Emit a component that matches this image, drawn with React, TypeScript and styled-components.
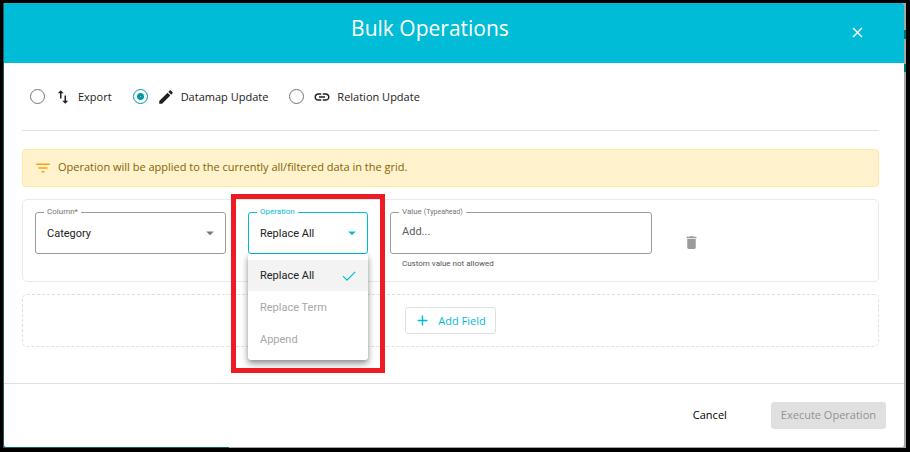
import React, { useState } from 'react';
import styled, { createGlobalStyle, css } from 'styled-components';
import {
  MdAdd,
  MdArrowDropDown,
  MdClose,
  MdDelete,
  MdEdit,
  MdFilterList,
  MdImportExport,
  MdLink,
} from 'react-icons/md';

const color = {
  primary: '#00bcd7',
  radio: '#0097a7',
  text: '#212121',
  outline: '#9b9b9b',
  line: '#e0e0e0',
};
const sans = "'Open Sans', sans-serif";
const roboto = "Roboto, sans-serif";

const GlobalStyle = createGlobalStyle`
  *, *::before, *::after { box-sizing: border-box; }
  body { margin: 0; background: #000; }
  button, input, select { margin: 0; font: inherit; color: inherit; }
  svg { display: block; flex: none; }
`;

const Backdrop = styled.div`
  margin: 3px 4px 4px 3px;
  padding: 0 2px 1px 1px;
  background:
    linear-gradient(#00707f, #00707f) right 27px / 2px 9px no-repeat,
    linear-gradient(#00707f, #00707f) right 61px / 2px 8px no-repeat,
    linear-gradient(to right, #175f67 25%, #a6a6a6 25%);
`;

const Dialog = styled.main`
  border-radius: 2px;
  overflow: hidden;
  background: #fff;
  color: ${color.text};
  font: 11px/16px ${sans};
`;

const Header = styled.header`
  display: grid;
  grid-template-columns: 1fr auto 1fr;
  align-items: center;
  height: 60px;
  padding: 0 38px 0 0;
  background: ${color.primary};
  color: #fff;
`;

const Title = styled.h1`
  grid-column: 2;
  margin: 0 10px 10px 0;
  font-size: 21px;
  line-height: 30px;
  font-weight: 400;
`;

const CloseButton = styled.button`
  justify-self: end;
  margin-bottom: 2px;
  padding: 0;
  border: 0;
  background: none;
  cursor: pointer;
`;

const Body = styled.div`
  display: flex;
  flex-direction: column;
  gap: 12px;
  padding: 18px 25px 36px 18px;
`;

const RadioGroup = styled.div`
  display: flex;
  gap: 21px;
  height: 50px;
  margin-bottom: 6px;
  padding: 8px 0 26px 8px;
  border-bottom: 1px solid ${color.line};
`;

const RadioLabel = styled.label`
  display: flex;
  align-items: center;
  gap: 6px;
  white-space: nowrap;
  cursor: pointer;
`;

const Radio = styled.input`
  appearance: none;
  width: 15px;
  height: 15px;
  margin: 0 3px 0 0;
  border: 1px solid #757575;
  border-radius: 50%;
  &:checked {
    border-color: ${color.radio};
    background: radial-gradient(circle, #7fcbd3 0, ${color.radio} 1px 3px, transparent 4px);
  }
`;

const Notice = styled.div`
  display: flex;
  align-items: center;
  gap: 6px;
  height: 38px;
  padding: 0 11px 2px;
  border: 1px solid #ffe9a6;
  border-radius: 4px;
  background: #fff2cd;
  color: #856404;
  svg { color: #f9a010; margin-top: 2px; }
`;

const FieldRow = styled.section`
  display: grid;
  grid-template-columns: 191fr 120fr 262fr 192fr;
  gap: 22px;
  align-items: start;
  height: 83px;
  padding: 12px;
  border: 1px solid #e8eaee;
  border-radius: 5px;
  font-family: ${roboto};
`;

const Field = styled.div<{ $active?: boolean }>`
  position: relative;
  min-width: 0;
  --edge: ${p => (p.$active ? color.primary : color.outline)};
  --label: ${p => (p.$active ? color.primary : '#757575')};
  --arrow: ${p => (p.$active ? color.primary : '#757575')};
`;

const FieldLabel = styled.label`
  position: absolute;
  top: -6px;
  left: 9px;
  padding: 0 3px;
  background: #fff;
  color: var(--label);
  font-size: 8px;
  line-height: 12px;
  white-space: nowrap;
  small { font-size: 7px; }
`;

const control = css`
  display: block;
  width: 100%;
  height: 42px;
  border: 1px solid var(--edge);
  border-radius: 3px;
  outline: 0;
  background: transparent;
`;

const Select = styled.select`
  ${control}
  appearance: none;
  padding: 2px 11px 0;
`;

const TextInput = styled.input`
  ${control}
  padding: 0 11px 4px;
  &::placeholder { color: #5c5c5c; opacity: 1; }
`;

const Arrow = styled(MdArrowDropDown)`
  position: absolute;
  top: 12px;
  right: 7px;
  color: var(--arrow);
  pointer-events: none;
`;

const Hint = styled.p`
  margin: 4px 12px 0;
  font-size: 8px;
  line-height: 12px;
  color: #555;
`;

const Menu = styled.ul`
  position: absolute;
  z-index: 1;
  top: 100%;
  left: 0;
  right: 0;
  display: grid;
  gap: 1px;
  margin: 0;
  padding: 6px 0 5px;
  border-radius: 0 0 3px 3px;
  background: #fff;
  box-shadow: 0 3px 5px rgba(0, 0, 0, 0.3), 0 4px 10px rgba(0, 0, 0, 0.2);
  list-style: none;
`;

const MenuItem = styled.li`
  display: flex;
  align-items: center;
  justify-content: space-between;
  height: 31px;
  padding: 0 12px;
  color: #a8a8a8;
  &[aria-selected='true'] {
    background: #f3f3f3;
    color: ${color.text};
  }
`;

const Highlight = styled.div`
  position: absolute;
  z-index: 2;
  inset: -18px -17px auto;
  height: 179px;
  border: 5px solid #ed1c24;
  pointer-events: none;
`;

const DeleteButton = styled.button`
  justify-self: start;
  margin: 22px 0 0 9px;
  padding: 0;
  border: 0;
  background: none;
  color: #9b9b9b;
  cursor: pointer;
`;

const AddArea = styled.div`
  display: flex;
  align-items: center;
  justify-content: center;
  height: 53px;
  border: 1px dashed ${color.line};
  border-radius: 5px;
`;

const AddButton = styled.button`
  display: flex;
  align-items: center;
  gap: 7px;
  height: 27px;
  padding: 0 9px 0 8px;
  border: 1px solid ${color.line};
  border-radius: 3px;
  background: #fff;
  color: ${color.primary};
  cursor: pointer;
`;

const Footer = styled.footer`
  display: flex;
  justify-content: flex-end;
  gap: 34px;
  padding: 18px;
  border-top: 1px solid ${color.line};
`;

const ActionButton = styled.button`
  height: 27px;
  padding: 0 10px 2px;
  border: 0;
  border-radius: 3px;
  background: none;
  color: #000;
  &:disabled {
    background: #e0e0e0;
    color: #929292;
  }
`;

const CheckIcon = () => (
  <svg width="14" height="12" viewBox="0 0 14 12" fill="none" stroke={color.primary} aria-hidden="true">
    <path d="M1 6.2 5 10.2 13.2 1.8" strokeWidth="1.2" />
  </svg>
);

const modes = [
  { id: 'export', label: 'Export', Icon: MdImportExport },
  { id: 'datamap', label: 'Datamap Update', Icon: MdEdit },
  { id: 'relation', label: 'Relation Update', Icon: MdLink },
];

const operations = ['Replace All', 'Replace Term', 'Append'];

export default function App() {
  const [mode, setMode] = useState('datamap');
  const [value, setValue] = useState('');

  return (
    <>
      <GlobalStyle />
      <Backdrop>
        <Dialog role="dialog" aria-labelledby="title">
          <Header>
            <Title id="title">Bulk Operations</Title>
            <CloseButton type="button" aria-label="Close">
              <MdClose size={17} />
            </CloseButton>
          </Header>
          <Body>
            <RadioGroup role="radiogroup" aria-label="Operation type">
              {modes.map(({ id, label, Icon }) => (
                <RadioLabel key={id}>
                  <Radio type="radio" name="mode" checked={mode === id} onChange={() => setMode(id)} />
                  <Icon size={18} />
                  {label}
                </RadioLabel>
              ))}
            </RadioGroup>
            <Notice>
              <MdFilterList size={18} />
              Operation will be applied to the currently all/filtered data in the grid.
            </Notice>
            <FieldRow>
              <Field>
                <Select id="column" defaultValue="Category">
                  <option>Category</option>
                </Select>
                <FieldLabel htmlFor="column">Column*</FieldLabel>
                <Arrow size={18} />
              </Field>
              <Field $active>
                <Select id="operation" defaultValue="Replace All">
                  {operations.map(name => (
                    <option key={name}>{name}</option>
                  ))}
                </Select>
                <FieldLabel htmlFor="operation">Operation</FieldLabel>
                <Arrow size={18} />
                <Menu role="listbox" aria-label="Operation">
                  {operations.map((name, i) => (
                    <MenuItem key={name} role="option" aria-selected={i === 0} aria-disabled={i !== 0}>
                      {name}
                      {i === 0 && <CheckIcon />}
                    </MenuItem>
                  ))}
                </Menu>
                <Highlight />
              </Field>
              <Field>
                <TextInput id="value" placeholder="Add..." value={value} onChange={e => setValue(e.target.value)} />
                <FieldLabel htmlFor="value">
                  Value <small>(Typeahead)</small>
                </FieldLabel>
                <Hint>Custom value not allowed</Hint>
              </Field>
              <DeleteButton type="button" aria-label="Delete field">
                <MdDelete size={17} />
              </DeleteButton>
            </FieldRow>
            <AddArea>
              <AddButton type="button">
                <MdAdd size={17} />
                Add Field
              </AddButton>
            </AddArea>
          </Body>
          <Footer>
            <ActionButton type="button">Cancel</ActionButton>
            <ActionButton type="button" disabled>
              Execute Operation
            </ActionButton>
          </Footer>
        </Dialog>
      </Backdrop>
    </>
  );
}
